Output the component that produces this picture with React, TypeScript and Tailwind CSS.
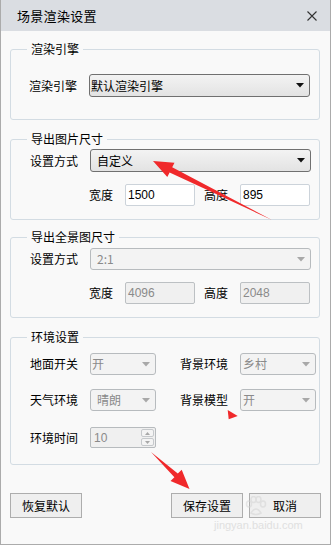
import React from "react";

const CJK = "font-['Noto_Sans_CJK_SC','Liberation_Sans',sans-serif]";

function Arrow({ disabled }: { disabled?: boolean }) {
  return (
    <svg width="8" height="5" viewBox="0 0 8 5" className="shrink-0">
      <polygon points="0,0 8,0 4,4.5" fill={disabled ? "#a8a8a8" : "#111"} />
    </svg>
  );
}

function Select({
  text,
  w,
  h,
  pl,
  disabled,
}: {
  text: string;
  w: string;
  h: string;
  pl: string;
  disabled?: boolean;
}) {
  return (
    <div
      className={`${w} ${h} ${pl} flex items-center justify-between pr-[5px] rounded-[3px] border ${
        disabled
          ? "border-[#b7bbbe] bg-[#f3f3f3] text-[#8a8a8a]"
          : "border-[#707070] bg-gradient-to-b from-[#f3f3f3] to-[#e3e3e3] text-black"
      }`}
    >
      <span className="leading-none">{text}</span>
      <Arrow disabled={disabled} />
    </div>
  );
}

function Input({ text, disabled }: { text: string; disabled?: boolean }) {
  return (
    <div
      className={`w-[70px] h-[22px] flex items-center pl-[2px] rounded-[2px] border font-['Liberation_Sans',sans-serif] text-[12px] ${
        disabled
          ? "border-[#bcc0c3] bg-[#f0f0f0] text-[#8a8a8a]"
          : "border-[#ccd3da] bg-white text-black"
      }`}
    >
      {text}
    </div>
  );
}

function Group({
  title,
  children,
  className,
  inner,
}: {
  title: string;
  children: React.ReactNode;
  className?: string;
  inner: string;
}) {
  return (
    <fieldset
      className={`w-[310px] border border-[#d3dce3] rounded-[3px] ${className ?? ""}`}
    >
      <legend className="ml-[16px] px-[4px] leading-[16px] h-[16px] text-[12px]">
        {title}
      </legend>
      <div className={inner}>{children}</div>
    </fieldset>
  );
}

function Btn({ text }: { text: string }) {
  return (
    <div className="w-[72px] h-[25px] flex items-center justify-center border border-[#adadad] bg-[#efefef] text-[12px]">
      {text}
    </div>
  );
}

export default function App() {
  return (
    <div
      className={`relative w-[331px] h-[545px] overflow-hidden bg-[#f9f9f9] border-x border-b border-[#ababab] text-[12px] text-black ${CJK}`}
    >
      {/* title bar */}
      <div className="h-[31px] bg-[#dadde2] flex items-center justify-between pl-[16px] pr-[13px]">
        <span className="text-[13px] leading-none tracking-[0.3px]">场景渲染设置</span>
        <svg width="10" height="10" viewBox="0 0 10 10">
          <path d="M0.5 0.5 L9.5 9.5 M9.5 0.5 L0.5 9.5" stroke="#333" strokeWidth="1.1" />
        </svg>
      </div>

      <div className="px-[9px] flex flex-col">
        {/* 渲染引擎 */}
        <Group title="渲染引擎" className="mt-[10px]" inner="pt-[17px] pb-[22px] pl-[18px]">
          <div className="flex items-center">
            <span className="w-[60px]">渲染引擎</span>
            <Select text="默认渲染引擎" w="w-[221px]" h="h-[23px]" pl="pl-[1px]" />
          </div>
        </Group>

        {/* 导出图片尺寸 */}
        <Group title="导出图片尺寸" className="mt-[11px]" inner="pt-[2px] pb-[13px] pl-[19px]">
          <div className="flex items-center">
            <span className="w-[60px]">设置方式</span>
            <Select text="自定义" w="w-[221px]" h="h-[23px]" pl="pl-[6px]" />
          </div>
          <div className="flex items-center mt-[12px] pl-[59px]">
            <span className="w-[36px]">宽度</span>
            <Input text="1500" />
            <span className="w-[36px] ml-[9px]">高度</span>
            <Input text="895" />
          </div>
        </Group>

        {/* 导出全景图尺寸 */}
        <Group title="导出全景图尺寸" className="mt-[9px]" inner="pt-[3px] pb-[13px] pl-[19px]">
          <div className="flex items-center">
            <span className="w-[60px]">设置方式</span>
            <Select text="2:1" w="w-[221px]" h="h-[22px]" pl="pl-[6px]" disabled />
          </div>
          <div className="flex items-center mt-[12px] pl-[59px]">
            <span className="w-[36px]">宽度</span>
            <Input text="4096" disabled />
            <span className="w-[36px] ml-[9px]">高度</span>
            <Input text="2048" disabled />
          </div>
        </Group>

        {/* 环境设置 */}
        <Group title="环境设置" className="mt-[11px]" inner="pt-[8px] pb-[16px] pl-[19px]">
          <div className="flex items-center">
            <span className="w-[60px]">地面开关</span>
            <Select text="开" w="w-[66px]" h="h-[22px]" pl="pl-[1px]" disabled />
            <span className="w-[60px] ml-[24px]">背景环境</span>
            <Select text="乡村" w="w-[76px]" h="h-[22px]" pl="pl-[2px]" disabled />
          </div>
          <div className="flex items-center mt-[14px]">
            <span className="w-[60px]">天气环境</span>
            <Select text="晴朗" w="w-[66px]" h="h-[22px]" pl="pl-[6px]" disabled />
            <span className="w-[60px] ml-[24px]">背景模型</span>
            <Select text="开" w="w-[76px]" h="h-[22px]" pl="pl-[2px]" disabled />
          </div>
          <div className="flex items-center mt-[16px]">
            <span className="w-[60px]">环境时间</span>
            <div className="w-[66px] h-[21px] flex items-stretch rounded-[2px] border border-[#b7bbbe] bg-[#f0f0f0]">
              <span className="flex-1 flex items-center pl-[3px] text-[#8a8a8a] font-['Liberation_Sans',sans-serif] text-[12px]">
                10
              </span>
              <div className="w-[15px] flex flex-col gap-[1px] p-[1px]">
                <div className="flex-1 flex items-center justify-center border border-[#c6c9cc] rounded-[2px] bg-[#f4f4f4]">
                  <svg width="5" height="3" viewBox="0 0 5 3">
                    <polygon points="0,3 5,3 2.5,0" fill="#a8a8a8" />
                  </svg>
                </div>
                <div className="flex-1 flex items-center justify-center border border-[#c6c9cc] rounded-[2px] bg-[#f4f4f4]">
                  <svg width="5" height="3" viewBox="0 0 5 3">
                    <polygon points="0,0 5,0 2.5,3" fill="#a8a8a8" />
                  </svg>
                </div>
              </div>
            </div>
          </div>
        </Group>

        {/* buttons */}
        <div className="flex items-center mt-[28px]">
          <Btn text="恢复默认" />
          <div className="ml-[89px]">
            <Btn text="保存设置" />
          </div>
          <div className="ml-[6px]">
            <Btn text="取消" />
          </div>
        </div>
      </div>

      {/* watermark (faint paw + url) */}
      <svg
        className="absolute left-[244px] top-[496px] pointer-events-none opacity-50"
        width="22"
        height="20"
        viewBox="0 0 22 20"
      >
        <g fill="none" stroke="#d2d2d2" strokeWidth="1.5">
          <ellipse cx="4" cy="8" rx="2.5" ry="3" />
          <ellipse cx="8.5" cy="3.5" rx="2.5" ry="3" />
          <ellipse cx="13.5" cy="3.5" rx="2.5" ry="3" />
          <ellipse cx="18" cy="8" rx="2.5" ry="3" />
          <path d="M6 17 Q11 9 16 17 Q11 20 6 17 Z" />
        </g>
      </svg>
      <span className="absolute left-[213px] top-[520px] font-['Liberation_Sans',sans-serif] text-[11px] leading-none text-[#e0e0e0] pointer-events-none">
        jingyan.baidu.com
      </span>

      {/* red annotation arrows */}
      <svg
        className="absolute left-0 top-0 pointer-events-none"
        width="331"
        height="545"
        viewBox="0 0 331 545"
      >
        <polygon
          points="152,161 173.5,162.7 171.2,167.2 271,220 168.6,172.6 166.3,177.1"
          fill="#f0292b"
        />
        <polygon points="226.7,410 236.7,416 227.7,419.3" fill="#f0292b" />
        <polygon
          points="188.5,489 180.7,469.7 176.8,473.6 150,452 173.4,477.2 169.5,481.1"
          fill="#f0292b"
        />
      </svg>
    </div>
  );
}
